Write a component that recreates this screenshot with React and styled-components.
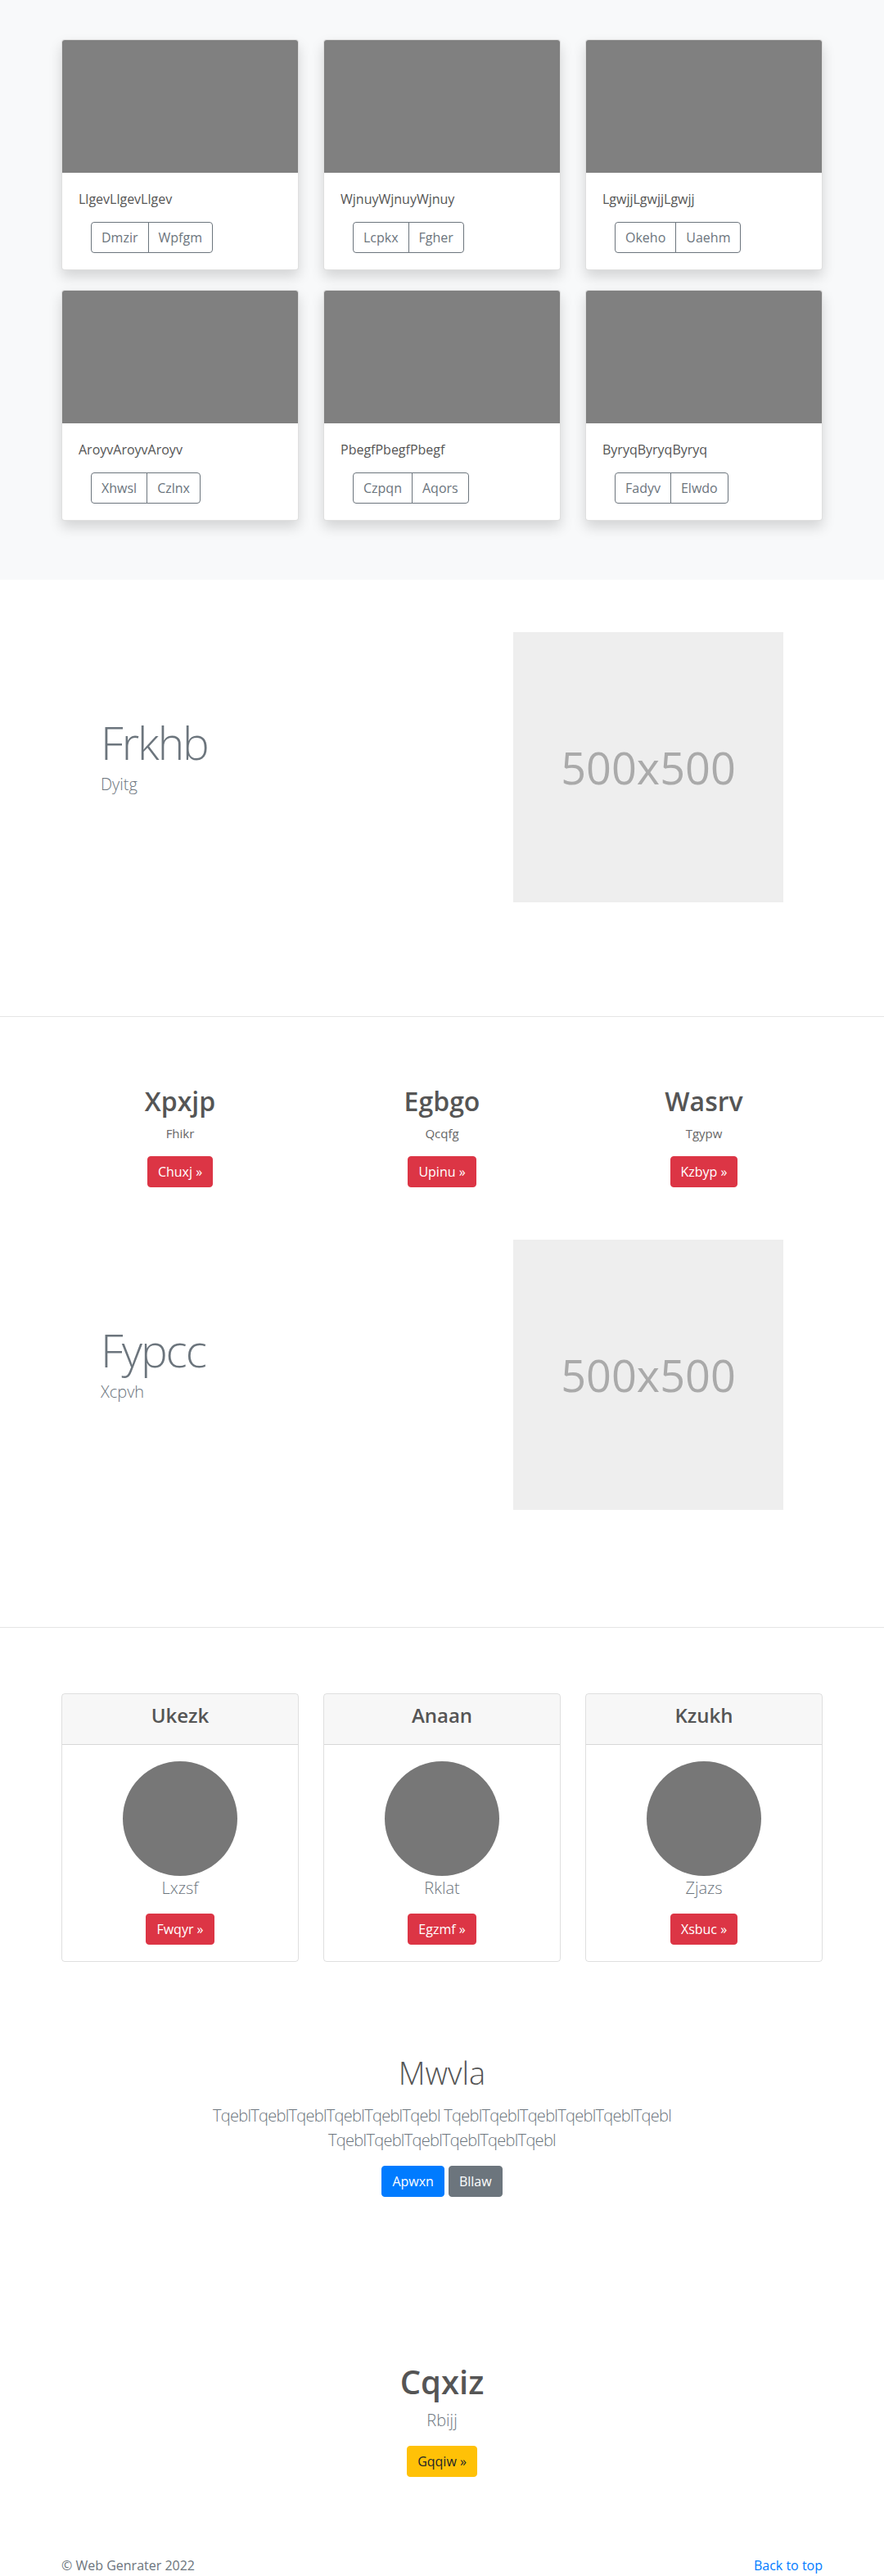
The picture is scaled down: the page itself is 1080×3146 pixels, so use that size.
import React from "react";
import styled, { createGlobalStyle } from "styled-components";

const GlobalStyle = createGlobalStyle`
  * { box-sizing: border-box; }
  body {
    margin: 0;
    font-family: "Open Sans", "Noto Sans", sans-serif;
    font-size: 16px;
    line-height: 1.5;
    color: #212529;
    background: #fff;
  }
`;

const Container = styled.div`
  max-width: 960px;
  margin: 0 auto;
  padding: 0 15px;
`;

const AlbumSection = styled.section`
  background: #f8f9fa;
  padding: 48px 0 72px;
`;

const CardGrid = styled.div`
  display: grid;
  grid-template-columns: repeat(3, 1fr);
  gap: ${(p) => p.$rowGap || 0}px 30px;
`;

const AlbumCard = styled.div`
  background: #fff;
  border: 1px solid rgba(0, 0, 0, 0.125);
  border-radius: 4px;
  box-shadow: 0 8px 16px rgba(0, 0, 0, 0.15);
  overflow: hidden;
`;

const Thumb = styled.div`
  height: 162px;
  background: #808080;
`;

const CardBody = styled.div`
  padding: 20px;
  text-align: ${(p) => p.$align || "left"};
`;

const CardText = styled.p`
  margin: 0 0 16px;
  color: #555;
  font-size: 16px;
  line-height: 24px;
`;

const BtnGroup = styled.div`
  display: inline-flex;
  margin-left: 15px;
`;

const OutlineBtn = styled.button`
  font-family: inherit;
  font-size: 16px;
  line-height: 24px;
  padding: 6px 12px;
  background: transparent;
  color: #6c757d;
  border: 1px solid #6c757d;
  border-radius: 0;
  &:first-child {
    border-radius: 4px 0 0 4px;
  }
  &:last-child {
    border-radius: 0 4px 4px 0;
    margin-left: -1px;
  }
`;

const colors = {
  danger: { bg: "#dc3545", fg: "#fff" },
  primary: { bg: "#007bff", fg: "#fff" },
  secondary: { bg: "#6c757d", fg: "#fff" },
  warning: { bg: "#ffc107", fg: "#212529" },
};

const Btn = styled.button`
  font-family: inherit;
  font-size: 16px;
  line-height: 24px;
  padding: 6px 12px;
  border: 1px solid ${(p) => colors[p.$variant].bg};
  background: ${(p) => colors[p.$variant].bg};
  color: ${(p) => colors[p.$variant].fg};
  border-radius: 4px;
  cursor: pointer;
`;

const FeatureSection = styled.section`
  padding-top: ${(p) => p.$top}px;
`;

const FeatureRow = styled.div`
  max-width: 960px;
  margin: 0 auto;
  padding: 0 63px;
  display: grid;
  grid-template-columns: 1fr 330px;
  align-items: center;
`;

const FeatureText = styled.div`
  padding-bottom: 28px;
`;

const FeatureHeading = styled.h2`
  margin: 0 0 3px;
  font-size: 55px;
  font-weight: 300;
  line-height: 66px;
  letter-spacing: -2px;
  color: #6c757d;
`;

const Lead = styled.p`
  margin: 0 0 ${(p) => (p.$mb === undefined ? 16 : p.$mb)}px;
  font-size: 20px;
  font-weight: 300;
  line-height: 30px;
  letter-spacing: ${(p) => p.$tight || 0}px;
  color: #6c757d;
`;

const Placeholder = styled.div`
  width: 330px;
  height: 330px;
  background: #eee;
  color: #aaa;
  font-size: 54px;
  display: flex;
  align-items: center;
  justify-content: center;
`;

const Divider = styled.hr`
  margin: ${(p) => p.$top}px 0 0;
  border: none;
  border-top: 1px solid rgba(0, 0, 0, 0.1);
  height: 0;
`;

const ColumnsSection = styled.section`
  padding-top: 84px;
`;

const Column = styled.div`
  text-align: center;
`;

const ColHeading = styled.h2`
  margin: 0 0 8px;
  font-size: 32px;
  font-weight: 600;
  line-height: 1.2;
  color: #555;
`;

const ColText = styled.p`
  margin: 0 0 16px;
  color: #666;
  font-size: 15px;
  line-height: 24px;
`;

const PricingSection = styled.section`
  padding: 80px 0 24px;
`;

const BoxCard = styled.div`
  border: 1px solid rgba(0, 0, 0, 0.125);
  border-radius: 4px;
  overflow: hidden;
`;

const BoxHeader = styled.div`
  background: rgba(0, 0, 0, 0.03);
  border-bottom: 1px solid rgba(0, 0, 0, 0.125);
  padding: 12px 20px;
  text-align: center;
`;

const BoxTitle = styled.h4`
  margin: 0 0 8px;
  font-size: 24px;
  font-weight: 600;
  line-height: 1.2;
  color: #555;
`;

const Avatar = styled.div`
  width: 140px;
  height: 140px;
  border-radius: 50%;
  background: #777;
  margin: 0 auto;
`;

const Jumbotron = styled.section`
  padding: 89px 15px 96px;
  text-align: center;
`;

const JumboInner = styled.div`
  max-width: 640px;
  margin: 0 auto;
`;

const JumboTitle = styled.h1`
  margin: 0 0 14px;
  font-size: 38px;
  font-weight: 300;
  line-height: 1.2;
  color: #555;
`;

const BtnRow = styled.div`
  display: flex;
  justify-content: center;
  gap: 5px;
  margin: 11px 0 8px;
`;

const CtaSection = styled.section`
  padding-top: 98px;
  text-align: center;
`;

const CtaTitle = styled.h1`
  margin: 0 0 8px;
  font-size: 40px;
  font-weight: 600;
  line-height: 1.2;
  color: #555;
`;

const Footer = styled.footer`
  padding-top: 96px;
  color: #6c757d;
`;

const FooterRow = styled(Container)`
  display: flex;
  justify-content: space-between;
  line-height: 24px;
`;

const FooterLink = styled.a`
  color: #007bff;
  text-decoration: none;
`;

const albumCards = [
  ["LlgevLlgevLlgev", "Dmzir", "Wpfgm"],
  ["WjnuyWjnuyWjnuy", "Lcpkx", "Fgher"],
  ["LgwjjLgwjjLgwjj", "Okeho", "Uaehm"],
  ["AroyvAroyvAroyv", "Xhwsl", "Czlnx"],
  ["PbegfPbegfPbegf", "Czpqn", "Aqors"],
  ["ByryqByryqByryq", "Fadyv", "Elwdo"],
];

const columns = [
  ["Xpxjp", "Fhikr", "Chuxj »"],
  ["Egbgo", "Qcqfg", "Upinu »"],
  ["Wasrv", "Tgypw", "Kzbyp »"],
];

const boxes = [
  ["Ukezk", "Lxzsf", "Fwqyr »"],
  ["Anaan", "Rklat", "Egzmf »"],
  ["Kzukh", "Zjazs", "Xsbuc »"],
];

function Feature({ title, sub, top }) {
  return (
    <FeatureSection $top={top}>
      <FeatureRow>
        <FeatureText>
          <FeatureHeading>{title}</FeatureHeading>
          <Lead $mb={0}>{sub}</Lead>
        </FeatureText>
        <Placeholder>500x500</Placeholder>
      </FeatureRow>
    </FeatureSection>
  );
}

export default function App() {
  const word = "TqeblTqeblTqeblTqeblTqeblTqebl";
  return (
    <>
      <GlobalStyle />
      <AlbumSection>
        <Container>
          <CardGrid $rowGap={24}>
            {albumCards.map(([t, a, b]) => (
              <AlbumCard key={t}>
                <Thumb />
                <CardBody>
                  <CardText>{t}</CardText>
                  <BtnGroup>
                    <OutlineBtn>{a}</OutlineBtn>
                    <OutlineBtn>{b}</OutlineBtn>
                  </BtnGroup>
                </CardBody>
              </AlbumCard>
            ))}
          </CardGrid>
        </Container>
      </AlbumSection>

      <Feature title="Frkhb" sub="Dyitg" top={64} />
      <Divider $top={139} />

      <ColumnsSection>
        <Container>
          <CardGrid>
            {columns.map(([h, p, b]) => (
              <Column key={h}>
                <ColHeading>{h}</ColHeading>
                <ColText>{p}</ColText>
                <Btn $variant="danger">{b}</Btn>
              </Column>
            ))}
          </CardGrid>
        </Container>
      </ColumnsSection>

      <Feature title="Fypcc" sub="Xcpvh" top={64} />
      <Divider $top={143} />

      <PricingSection>
        <Container>
          <CardGrid>
            {boxes.map(([h, p, b]) => (
              <BoxCard key={h}>
                <BoxHeader>
                  <BoxTitle>{h}</BoxTitle>
                </BoxHeader>
                <CardBody $align="center">
                  <Avatar />
                  <Lead>{p}</Lead>
                  <Btn $variant="danger">{b}</Btn>
                </CardBody>
              </BoxCard>
            ))}
          </CardGrid>
        </Container>
      </PricingSection>

      <Jumbotron>
        <JumboInner>
          <JumboTitle>Mwvla</JumboTitle>
          <Lead $mb={16} $tight={-0.7}>{`${word} ${word} ${word}`}</Lead>
          <BtnRow>
            <Btn $variant="primary">Apwxn</Btn>
            <Btn $variant="secondary">Bllaw</Btn>
          </BtnRow>
        </JumboInner>
      </Jumbotron>

      <CtaSection>
        <CtaTitle>Cqxiz</CtaTitle>
        <Lead>Rbijj</Lead>
        <Btn $variant="warning">Gqqiw »</Btn>
      </CtaSection>

      <Footer>
        <FooterRow>
          <span>© Web Genrater 2022</span>
          <FooterLink href="#">Back to top</FooterLink>
        </FooterRow>
      </Footer>
    </>
  );
}
